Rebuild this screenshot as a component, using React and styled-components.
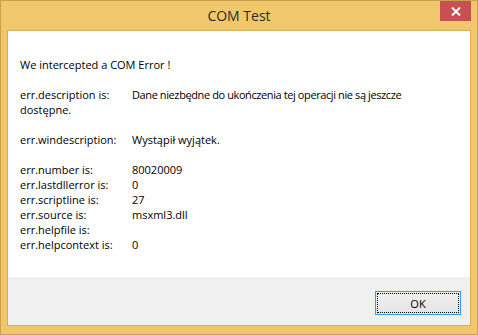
import React from 'react'
import styled, { createGlobalStyle } from 'styled-components'

const GlobalStyle = createGlobalStyle`
  html, body {
    margin: 0;
    padding: 0;
    background: #ffffff;
  }
  body {
    font-family: 'Open Sans', 'Noto Sans', sans-serif;
  }
`

const fields = [
  { label: 'err.number is:', value: '80020009' },
  { label: 'err.lastdllerror is:', value: '0' },
  { label: 'err.scriptline is:', value: '27' },
  { label: 'err.source is:', value: 'msxml3.dll' },
  { label: 'err.helpfile is:', value: '' },
  { label: 'err.helpcontext is:', value: '0' },
]

const App = () => {
  return (
    <>
      <GlobalStyle />
      <Window>
        <TitleBar>
          <span />
          <Title>COM Test</Title>
          <CloseButton aria-label="Close">
            <svg width="10" height="9" viewBox="0 0 10 9">
              <path d="M1 0.5 L9 8.5 M9 0.5 L1 8.5" stroke="#fff" strokeWidth="2" />
            </svg>
          </CloseButton>
        </TitleBar>
        <Client>
          <Content>
            <Line>We intercepted a COM Error !</Line>
            <Group>
              <Row>
                <Label>err.description is:</Label>
                <Value $tight>Dane niezbędne do ukończenia tej operacji nie są jeszcze</Value>
              </Row>
              <Line>dostępne.</Line>
            </Group>
            <Group>
              <Row>
                <Label>err.windescription:</Label>
                <Value>Wystąpił wyjątek.</Value>
              </Row>
            </Group>
            <Group>
              {fields.map((field) => (
                <Row key={field.label}>
                  <Label>{field.label}</Label>
                  <Value>{field.value}</Value>
                </Row>
              ))}
            </Group>
          </Content>
          <Footer>
            <OkButton>
              <FocusRing>OK</FocusRing>
            </OkButton>
          </Footer>
        </Client>
      </Window>
    </>
  )
}

const Window = styled.div`
  width: 478px;
  height: 335px;
  box-sizing: border-box;
  border: 1px solid #c9a14f;
  background: #f0c86b;
  padding: 0 6px 8px 6px;
  display: flex;
  flex-direction: column;
`

const TitleBar = styled.div`
  height: 29px;
  display: grid;
  grid-template-columns: 1fr auto 1fr;
  align-items: start;
`

const Title = styled.div`
  font-size: 14px;
  color: #2b2b2b;
  line-height: 29px;
  text-align: center;
`

const CloseButton = styled.div`
  justify-self: end;
  width: 31px;
  height: 20px;
  background: #c75050;
  display: flex;
  align-items: center;
  justify-content: center;
`

const Client = styled.div`
  flex: 1;
  border: 1px solid #d9ae55;
  background: #ffffff;
  display: flex;
  flex-direction: column;
`

const Content = styled.div`
  flex: 1;
  padding: 26px 20px 0 12px;
  font-size: 11px;
  line-height: 15px;
  color: #000;
  display: flex;
  flex-direction: column;
  gap: 15px;
`

const Line = styled.div`
  white-space: nowrap;
`

const Group = styled.div`
  display: flex;
  flex-direction: column;
`

const Row = styled.div`
  display: grid;
  grid-template-columns: 112px 1fr;
  white-space: nowrap;
`

const Label = styled.span``

const Value = styled.span`
  letter-spacing: ${(p) => (p.$tight ? '-0.4px' : 'normal')};
`

const Footer = styled.div`
  height: 48px;
  box-sizing: border-box;
  background: #f0f0f0;
  padding: 14px 9px 10px 0;
  display: flex;
  justify-content: flex-end;
  align-items: flex-start;
`

const OkButton = styled.div`
  width: 86px;
  height: 24px;
  box-sizing: border-box;
  border: 1px solid #3399ff;
  background: linear-gradient(#f0f0f0, #e5e5e5);
  padding: 1px;
  display: flex;
`

const FocusRing = styled.div`
  flex: 1;
  border: 1px dotted #000;
  display: flex;
  align-items: center;
  justify-content: center;
  font-size: 11px;
  color: #000;
`

export default App
